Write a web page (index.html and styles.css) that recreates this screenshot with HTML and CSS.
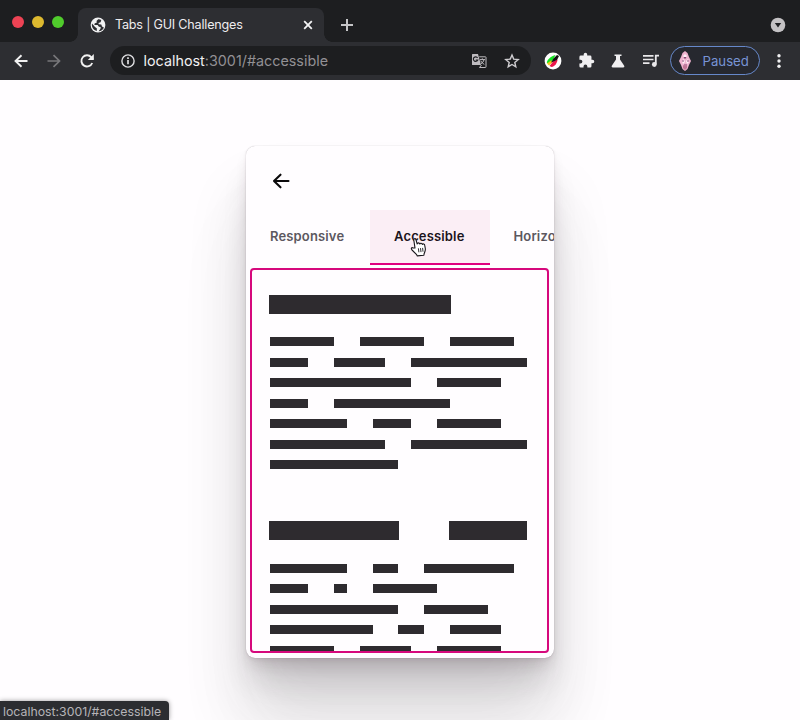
FILE: index.html
```html
<!DOCTYPE html>
<html lang="en">
<head>
<meta charset="utf-8">
<title>Tabs | GUI Challenges</title>
<link rel="stylesheet" href="styles.css">
</head>
<body>
<header class="browser">
  <div class="tabstrip">
    <div class="lights"><i class="red"></i><i class="yellow"></i><i class="green"></i></div>
    <div class="tab">
      <svg class="globe" width="16" height="16" viewBox="0 0 16 16"><circle cx="8" cy="8" r="7.4" fill="#f1f1f2"/><path d="M8.2 2.2 6.5 4.1l.4 1.4-2.3.9-.2 1.5 3.2.1 1.3 1.7 1.8.3-.2 1.8-1.9 2.4c2.2-.1 4.7-1.700 5.300-3.800L12 9.600 11.300 7.400 8.700 7.300 8.500 6l2.100-.8.700-2.200C10.300 2.300 9.200 2.100 8.200 2.200zM2 6.600 5 10l1.800 1.200v2.700C3.600 13.400 1.200 10 2 6.600z" fill="#2c2d31"/></svg>
      <span class="title">Tabs | GUI Challenges</span>
      <svg class="close" width="10" height="10" viewBox="0 0 10 10"><path d="m1.200 1.200 7.600 7.600m0-7.600L1.200 8.800" stroke="#f4f4f5" stroke-width="1.800"/></svg>
    </div>
    <svg class="plus" width="14" height="14" viewBox="0 0 14 14"><path d="M7 1v12M1 7h12" stroke="#c5c5c7" stroke-width="2"/></svg>
    <svg class="tabsearch" width="16" height="16" viewBox="0 0 16 16"><circle cx="8" cy="8" r="7.300" fill="#c4c2c4"/><path d="M4.800 6h6.400L8 10.600z" fill="#202124"/></svg>
  </div>
  <div class="toolbar">
    <svg class="back" width="16" height="16" viewBox="0 0 16 16"><path d="M14.500 8H2.500m6-5.800L2.500 8l6 5.800" fill="none" stroke="#f1f1f1" stroke-width="1.900"/></svg>
    <svg class="forward" width="16" height="16" viewBox="0 0 16 16"><path d="M1.500 8h12m-6-5.800 6 5.800-6 5.800" fill="none" stroke="#77777a" stroke-width="1.700"/></svg>
    <svg class="reload" width="16" height="16" viewBox="0 0 16 16"><path d="M13.200 10A5.600 5.600 0 1 1 12.300 4.300L14 6" fill="none" stroke="#f1f1f1" stroke-width="1.900"/><path d="M14.800 1v6H8.800z" fill="#f1f1f1"/></svg>
    <div class="omnibox">
      <svg width="16" height="16" viewBox="0 0 16 16"><circle cx="8" cy="8" r="6.100" fill="none" stroke="#dedee0" stroke-width="1.400"/><path d="M8 7v4.300M8 4.300v1.600" stroke="#dedee0" stroke-width="1.700"/></svg>
      <span class="url"><b>localhost</b>:3001/#accessible</span>
      <svg class="translate" width="16" height="16" viewBox="0 0 16 16"><path d="M1.500 1H7l3 11H1.500Q1 12 1 11.500v-10Q1 1 1.500 1z" fill="#bebbbf"/><path d="M6.600 4.800A2.300 2.300 0 1 0 6.800 7H4.700" fill="none" stroke="#202124" stroke-width="1.200"/><path d="M8.200 3.800h6.200q.6 0 .6.600v9.500q0 .600-.6.600H8.500l2-2.500M8.900 6.600H14M11.300 5.300v1.300m1.700 0c-.4 2-1.800 3.400-3 4.200m-.3-3c.8 1.500 2 2.700 3.600 3.600" fill="none" stroke="#bebbbf" stroke-width="1"/></svg>
      <svg class="star" width="16" height="16" viewBox="0 0 16 16"><path d="m8 2 1.700 4.100 4.500.4-3.400 2.900 1 4.400L8 11.500l-3.800 2.300 1-4.400L1.800 6.500l4.500-.4z" fill="none" stroke="#cfcdd0" stroke-width="1.400"/></svg>
    </div>
    <svg class="ext1" width="18" height="18" viewBox="0 0 18 18"><circle cx="9" cy="9" r="8.400" fill="#fff"/><path d="M2.800 10.500C3.500 7 7 4.500 11.500 3L9 8l-4 4.500z" fill="#16e324"/><path d="m3 11.500 4-3 2 1-4 4z" fill="#f4c51e"/><path d="m5.500 14 4-5 4-1.500c0 3-2.500 7-6 7.500z" fill="#ec174b"/><path d="m7 10.500 2.500-4L13 3l2 1-2 4-3.500 1.500z" fill="#111"/></svg>
    <svg class="puzzle" width="17" height="17" viewBox="0 0 24 24"><path d="M20.500 11H19V7a2 2 0 0 0-2-2h-4V3.500a2.500 2.500 0 0 0-5 0V5H4a2 2 0 0 0-2 2v3.800h1.500a2.700 2.700 0 0 1 0 5.400H2V20a2 2 0 0 0 2 2h3.800v-1.500a2.700 2.700 0 0 1 5.400 0V22H17a2 2 0 0 0 2-2v-4h1.500a2.500 2.500 0 0 0 0-5z" fill="#f0eff1"/></svg>
    <svg class="flask" width="16" height="16" viewBox="0 0 16 16"><path d="M4.500 1.500h7V3H10v3.500l4.200 6.300q.8 1.700-1 1.700H2.800q-1.800 0-1-1.700L6 6.500V3H4.500z" fill="#f0eff1"/></svg>
    <svg class="queue" width="18" height="16" viewBox="0 0 18 16"><path d="M1 2.800h10.500M1 6.500h10.500M1 10.200h6.500" stroke="#e9e8ea" stroke-width="1.700"/><path d="M17 2.700h-3.200v8.500" fill="none" stroke="#e9e8ea" stroke-width="1.800"/><circle cx="12.300" cy="11.500" r="2.400" fill="#e9e8ea"/></svg>
    <div class="profile">
      <svg width="14" height="22" viewBox="0 0 14 22"><path d="M7 1 9.500 3l1.500 4 2 4-2 4-1.500 4L7 21l-2.500-2L3 15l-2-4 2-4 1.500-4z" fill="#efb3cf"/><path d="m5 6 2-2 2 2-2 2zM4 11l2-2 1 3-2 2zm4 0 2-2 1 3-2 2z" fill="#fff0f7"/><path d="m6 7 1 1.500L8 7M4 11h2m3 0h2m-5 4h3" stroke="#8d4d78" stroke-width="1"/><path d="m5 15 2 1 2-1v3l-2 2-2-2z" fill="#c17696"/></svg>
      <span>Paused</span>
    </div>
    <svg class="dots" width="4" height="16" viewBox="0 0 4 16"><g fill="#f1f1f2"><circle cx="2" cy="2.800" r="1.700"/><circle cx="2" cy="8" r="1.700"/><circle cx="2" cy="13.200" r="1.700"/></g></svg>
  </div>
</header>
<main class="stage">
  <article class="card">
    <div class="card-head"><svg width="18" height="16" viewBox="0 0 18 16"><path d="M16.500 8H2m6.500-6.300L2 8l6.500 6.300" fill="none" stroke="#0b0a0b" stroke-width="2.100" stroke-linecap="round" stroke-linejoin="round"/></svg></div>
    <nav class="snap-tabs"><a>Responsive</a><a class="active">Accessible</a><a>Horizontal</a></nav>
    <section class="panel">
      <h2><i class="w7"></i></h2>
      <div class="lines">
        <p><i class="w5"></i><i class="w5"></i><i class="w5"></i></p>
        <p><i class="w3"></i><i class="w4"></i><i class="w9"></i></p>
        <p><i class="w11"></i><i class="w5"></i></p>
        <p><i class="w3"></i><i class="w9"></i></p>
        <p><i class="w6"></i><i class="w3"></i><i class="w5"></i></p>
        <p><i class="w9"></i><i class="w9"></i></p>
        <p><i class="w10"></i></p>
      </div>
      <h2 class="second"><i class="w5"></i><i class="w3"></i></h2>
      <div class="lines">
        <p><i class="w6"></i><i class="w2"></i><i class="w7"></i></p>
        <p><i class="w3"></i><i class="w1"></i><i class="w5"></i></p>
        <p><i class="w10"></i><i class="w5"></i></p>
        <p><i class="w8"></i><i class="w2"></i><i class="w4"></i></p>
        <p><i class="w5"></i><i class="w4"></i><i class="w5"></i></p>
      </div>
    </section>
  </article>
</main>
<div class="status">localhost:3001/#accessible</div>
<svg class="cursor" width="18" height="20" viewBox="0 0 18 20"><path d="M5 11 3.800 3.200C3.500 1.500 5.400 1 5.900 2.600L7.200 7c.2-1.500 2.200-1.500 2.600 0 .4-1.100 2.200-1 2.500.4.600-1 2.200-.5 2.400.8l.6 3.300c.4 2.200-.7 3.600-1.200 5.200l-.2 1.500-6.600.7-.9-1.600L2 13c-1.400-1.700-.3-2.900 1.100-2z" fill="#fff" stroke="#17151a" stroke-width="1.100" stroke-linejoin="round"/><path d="m8.400 11.300.5 4m1.600-4.200.5 4m1.600-4.200.4 3.800" stroke="#17151a" stroke-width=".9"/></svg>
</body>
</html>
```
FILE: styles.css
```css
* { box-sizing: border-box; }
html, body { margin: 0; height: 100%; overflow: hidden; }
body { background: #fffdff; font-family: Inter, sans-serif; display: flex; flex-direction: column; }
svg { display: block; flex: none; }

.browser { height: 80px; flex: none; background: #2d2e32; }
.tabstrip { height: 42px; background: #1d1e20; display: flex; align-items: center; padding-top: 8px; position: relative; }
.lights { display: flex; gap: 8.400px; margin: -7px 0 0 11.500px; }
.lights i { width: 12px; height: 12px; border-radius: 50%; }
.red { background: #ed4354; }
.yellow { background: #ddb92f; }
.green { background: #50cc2c; }
.tab { width: 246px; height: 34px; margin-left: 13.700px; background: #2d2e32; border-radius: 8px 8px 0 0; display: flex; align-items: center; padding: 0 11px 0 12.500px; position: relative; }
.tab::before, .tab::after { content: ""; position: absolute; bottom: 0; width: 8px; height: 8px; }
.tab::before { left: -8px; background: radial-gradient(circle at 0 0, #1d1e20 7.500px, #2d2e32 8px); }
.tab::after { right: -8px; background: radial-gradient(circle at 100% 0, #1d1e20 7.500px, #2d2e32 8px); }
.title { font-size: 12.600px; letter-spacing: -.2px; color: #edecee; margin: -1px 0 0 8.500px; white-space: nowrap; }
.close { margin-left: auto; }
.plus { margin-left: 15.700px; }
.tabsearch { margin: 0 14px 0 auto; }

.toolbar { height: 37px; display: flex; align-items: center; padding-left: 12.500px; }
.forward { margin-left: 17px; }
.reload { margin-left: 17px; }
.omnibox { width: 421px; height: 29px; margin-left: 15px; border-radius: 15px; background: #1d1e20; display: flex; align-items: center; padding: 0 11px 0 10px; }
.url { margin-left: 8px; font-size: 14.350px; color: #929094; white-space: nowrap; }
.url b { font-weight: 400; color: #f1f0f2; }
.translate { margin-left: auto; }
.star { margin-left: 17px; }
.ext1 { margin-left: 13px; }
.puzzle { margin-left: 16px; }
.flask { margin-left: 15px; }
.queue { margin-left: 16px; }
.profile { width: 90px; height: 29px; margin-left: 10px; border: 1.500px solid #6688ca; border-radius: 15px; background: #26282f; display: flex; align-items: center; padding-left: 7px; color: #7894d5; font-size: 13.200px; }
.profile span { margin-left: 11px; }
.dots { margin-left: 17px; }

.stage { flex: 1; padding: 66px 0 0 246px; overflow: hidden; }
.card { width: 308px; height: 512px; border-radius: 9px; background: #fffdff; overflow: hidden; display: flex; flex-direction: column; box-shadow: 0 0 1px rgba(40,30,40,.35), 0 2px 4px rgba(60,40,50,.06), 0 9px 14px -3px rgba(60,35,45,.13), 0 26px 30px -7px rgba(50,35,45,.15), 0 50px 60px rgba(40,35,40,.13), 0 80px 80px rgba(40,35,40,.06); }
.card-head { height: 64px; padding: 26.500px 0 0 25.500px; }
.snap-tabs { display: flex; height: 55px; flex: none; }
.snap-tabs a { flex: none; padding: 0 24px; line-height: 53px; font-size: 13px; font-weight: 600; letter-spacing: .15px; color: #5c5860; border-bottom: 2px solid transparent; }
.snap-tabs a:first-child { width: 124px; }
.snap-tabs a.active { width: 119.500px; color: #1b141c; background: #fbeef5 padding-box; border-color: #e00080; }
.panel { width: 299px; height: 385px; margin: 3.400px 0 0 4.300px; border: 2px solid #d6087c; border-radius: 4px; overflow: hidden; padding: 24.500px 0 0 17.200px; --u: 12.840px; }
h2 { margin: 0; display: flex; height: 19px; gap: 49.500px; --u: 25.960px; }
h2.second { margin-top: 52px; }
.lines { margin: 23.500px 0 0 .4px; display: grid; gap: 11.470px; }
.lines p { margin: 0; display: flex; height: 9px; gap: 25.680px; }
.panel i { background: #2e2b2f; width: calc(var(--n) * var(--u)); flex: none; }
.w1 { --n: 1; } .w2 { --n: 2; } .w3 { --n: 3; } .w4 { --n: 4; } .w5 { --n: 5; } .w6 { --n: 6; }
.w7 { --n: 7; } .w8 { --n: 8; } .w9 { --n: 9; } .w10 { --n: 10; } .w11 { --n: 11; }

.status { position: absolute; left: 0; bottom: 0; width: 169px; height: 19px; padding-left: 3px; background: #2c2d31; border-top-right-radius: 4px; color: #b6b4b8; font-size: 12.300px; line-height: 22px; box-shadow: 0 0 5px rgba(0,0,0,.4); white-space: nowrap; }
.cursor { position: absolute; left: 409.500px; top: 237px; }
```
